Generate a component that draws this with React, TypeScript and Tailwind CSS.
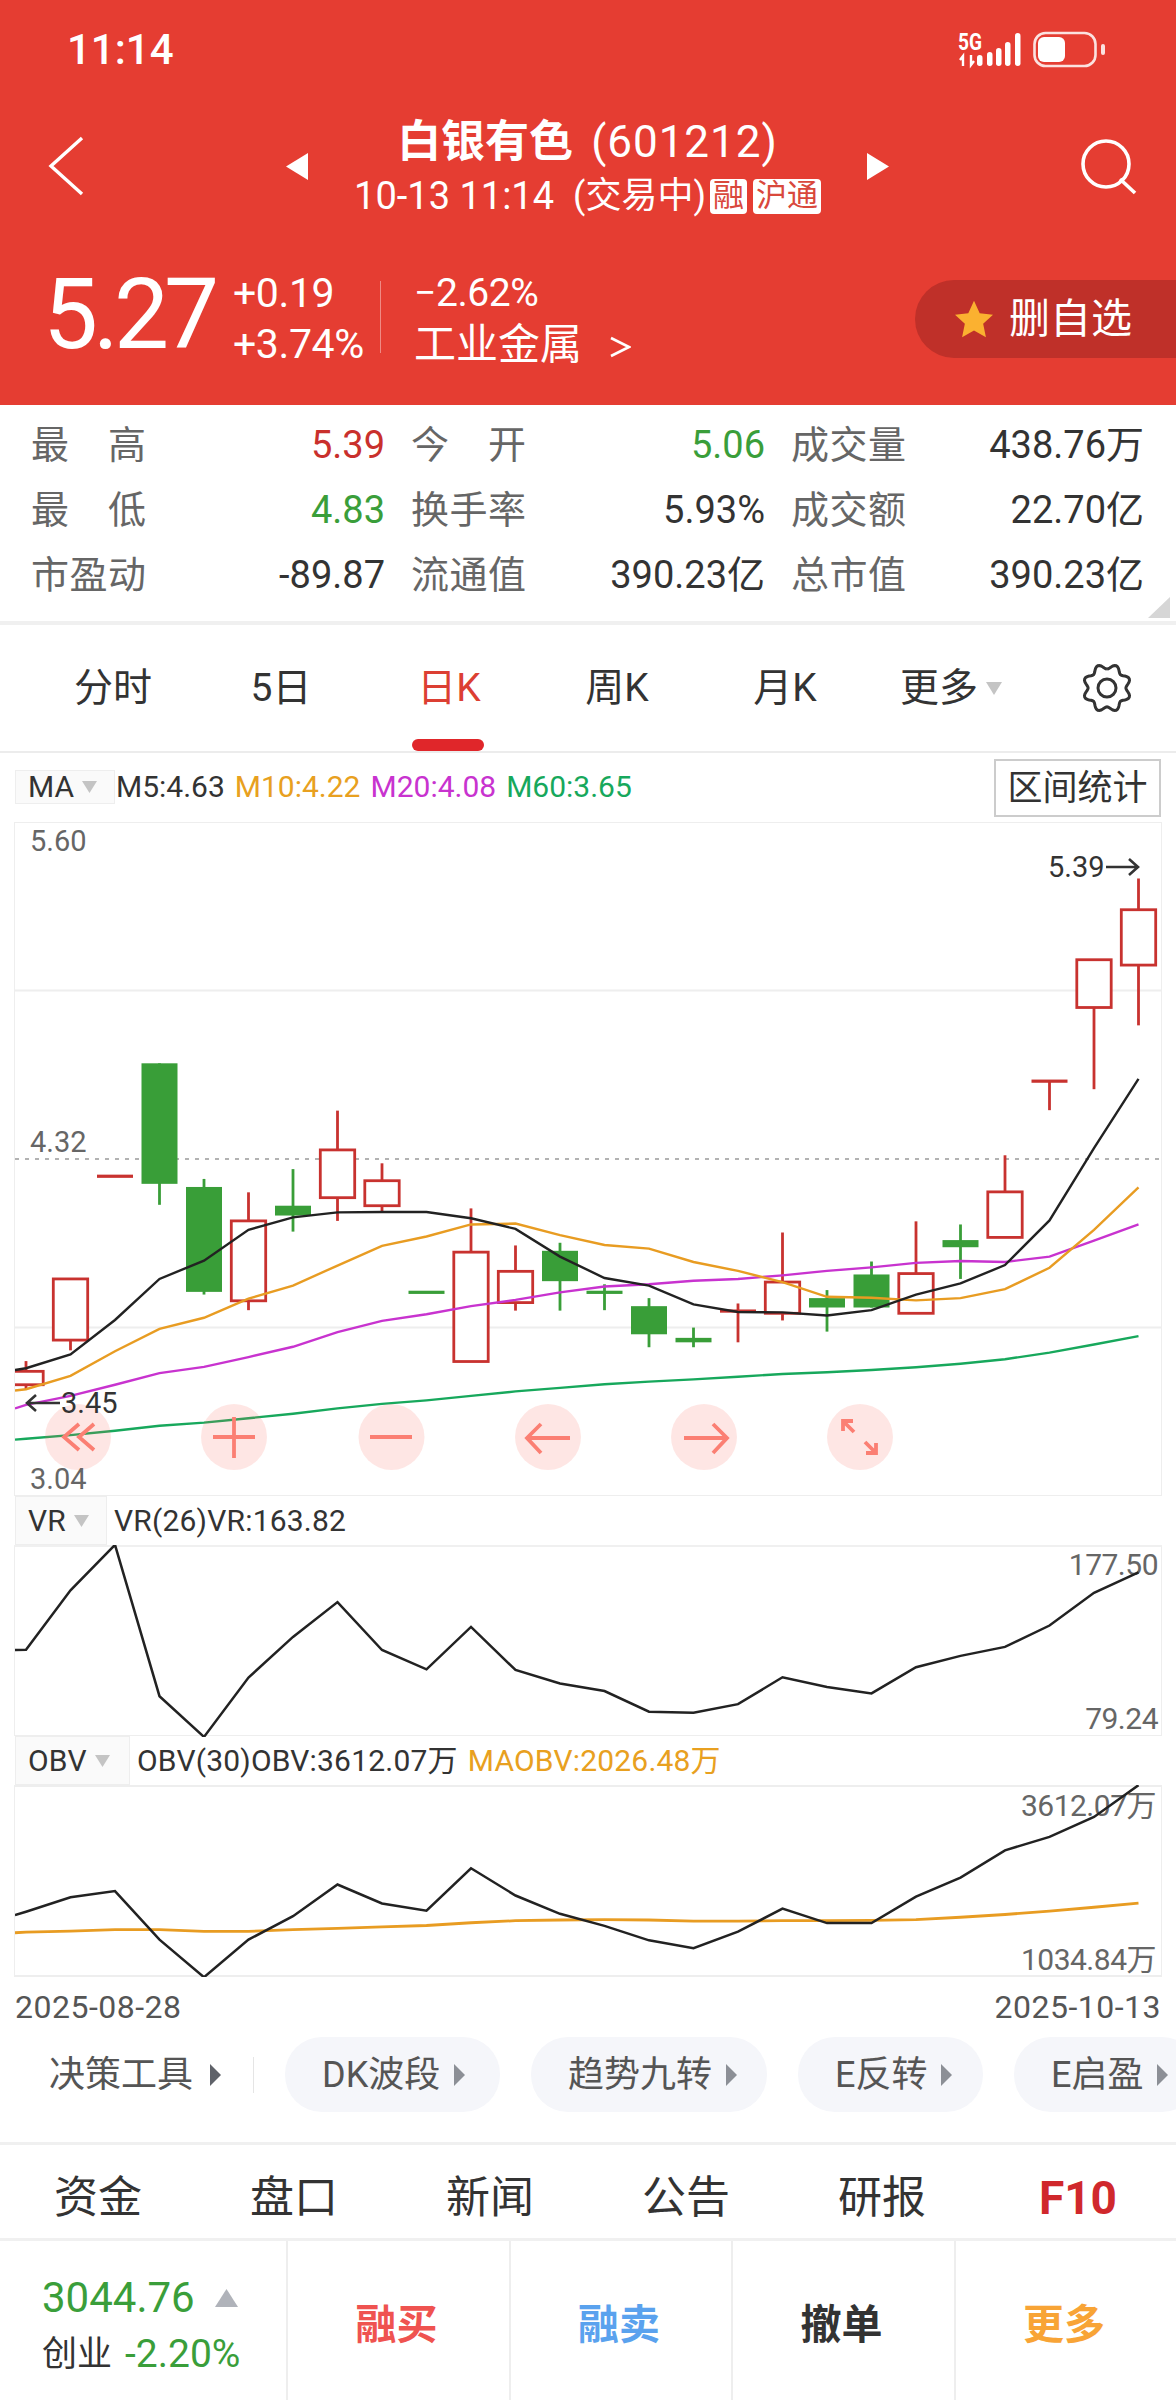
const FONT = "font-['Roboto','Noto_Sans_CJK_SC',sans-serif]";

const RED = '#c8322f';
const GREEN = '#399e38';
const cx = (i: number) => 26 + 44.5 * i;
const zy = (z: number) => 820 + z / 2.24;

// [type, bodyTop, bodyBottom, wickTop, wickBottom] in zoomed units
type Candle = ['r' | 'g', number, number, number | null, number | null];
const candles: Candle[] = [
  ['r', 1235, 1265, 1212, 1275],
  ['r', 1028, 1165, null, 1188],
  ['r', 798, 798, null, null],
  ['g', 545, 815, null, 862],
  ['g', 822, 1057, 804, 1063],
  ['r', 898, 1077, 834, 1098],
  ['g', 864, 886, 782, 922],
  ['r', 739, 846, 651, 898],
  ['r', 808, 864, 769, 877],
  ['g', 1058, 1058, null, null],
  ['r', 968, 1213, 870, null],
  ['r', 1011, 1081, 953, 1099],
  ['g', 965, 1033, 947, 1099],
  ['g', 1058, 1058, 1040, 1098],
  ['g', 1089, 1152, 1071, 1181],
  ['g', 1160, 1170, 1137, 1181],
  ['r', 1100, 1100, 1083, 1170],
  ['r', 1035, 1105, 924, 1121],
  ['g', 1071, 1092, 1053, 1146],
  ['g', 1018, 1092, 989, null],
  ['r', 1016, 1105, 899, null],
  ['g', 941, 957, 906, 1028],
  ['r', 833, 935, 751, null],
  ['r', 585, 585, null, 650],
  ['r', 313, 420, null, 603],
  ['r', 201, 325, 131, 460],
];

const ma5 = [1228, 1197, 1120, 1028, 987, 918, 890, 879, 878, 878, 892, 916, 978, 1026, 1043, 1085, 1102, 1103, 1110, 1098, 1063, 1038, 997, 897, 735, 580];
const ma10 = [1275, 1245, 1190, 1140, 1115, 1072, 1043, 998, 954, 933, 906, 904, 930, 952, 960, 990, 1010, 1035, 1068, 1070, 1076, 1071, 1051, 1003, 918, 823];
const ma20 = [1310, 1290, 1265, 1239, 1225, 1203, 1180, 1147, 1122, 1107, 1089, 1075, 1058, 1045, 1040, 1032, 1028, 1020, 1010, 1002, 992, 988, 990, 978, 942, 906];
const ma60 = [1386, 1378, 1368, 1357, 1350, 1340, 1330, 1318, 1308, 1300, 1290, 1280, 1272, 1264, 1258, 1253, 1247, 1241, 1237, 1232, 1226, 1218, 1208, 1193, 1175, 1156];

const vr = [492, 320, 188, 627, 745, 573, 455, 354, 493, 549, 426, 551, 590, 612, 672, 675, 650, 572, 600, 619, 543, 510, 484, 422, 327, 268];
const obv = [1252, 1210, 1192, 1333, 1442, 1333, 1265, 1173, 1228, 1249, 1126, 1205, 1258, 1293, 1335, 1358, 1310, 1243, 1285, 1285, 1208, 1153, 1074, 1035, 977, 885];
const maobv = [1311, 1308, 1304, 1304, 1309, 1309, 1304, 1300, 1296, 1292, 1284, 1278, 1276, 1275, 1276, 1279, 1279, 1278, 1278, 1277, 1275, 1268, 1260, 1250, 1239, 1227];

const maPoints = (list: number[], leftZ: number) =>
  `15,${zy(leftZ)} ` + list.map((z, i) => `${cx(i)},${zy(z)}`).join(' ');
const subY = (z: number) => 1480 + z / 2.9;
const subPoints = (list: number[], leftZ: number) =>
  `15,${subY(leftZ)} ` + list.map((z, i) => `${cx(i)},${subY(z)}`).join(' ');

const gearPath = Array.from({ length: 97 }, (_, i) => {
  const t = (i / 96) * Math.PI * 2;
  const r = 21.5 - 2.6 * Math.cos(8 * t);
  return `${i === 0 ? 'M' : 'L'}${(25 + r * Math.sin(t)).toFixed(2)} ${(25 - r * Math.cos(t)).toFixed(2)}`;
}).join(' ');

const Tri = ({ dir, color, w, h }: { dir: 'l' | 'r' | 'd' | 'u'; color: string; w: number; h: number }) => {
  const pts = {
    l: `${w},0 ${w},${h} 0,${h / 2}`,
    r: `0,0 ${w},${h / 2} 0,${h}`,
    d: `0,0 ${w},0 ${w / 2},${h}`,
    u: `${w / 2},0 ${w},${h} 0,${h}`,
  }[dir];
  return (
    <svg width={w} height={h} className="block shrink-0">
      <polygon points={pts} fill={color} strokeLinejoin="round" />
    </svg>
  );
};

const StatusBar = () => (
  <div className="flex h-[98px] items-start justify-between pl-[67px] pr-[71px] pt-[27px] text-white">
    <span className="text-[42px] leading-[46px] font-medium">11:14</span>
    <svg width={147} height={40} viewBox="958 30 147 40" className="mt-[3px] block">
      <text x="958" y="50" fill="#fff" fontSize="23" fontWeight="700" fontFamily="Roboto" textLength="24" lengthAdjust="spacingAndGlyphs">5G</text>
      <path d="M963 66v-10l-3 4M971 55v10l3-4" stroke="#fff" strokeWidth="2.4" fill="none" />
      {[[977, 55], [987, 52], [996, 48], [1005, 42], [1015, 33]].map(([x, y]) => (
        <rect key={x} x={x} y={y} width="5.5" height={66 - y} rx="2.7" fill="#fff" />
      ))}
      <rect x="1034.5" y="33" width="61" height="33" rx="11" fill="none" stroke="#fff" strokeOpacity="0.85" strokeWidth="2.6" />
      <rect x="1038" y="37" width="27" height="25" rx="6" fill="#fff" />
      <rect x="1101" y="44" width="4" height="11" rx="2" fill="#fff" fillOpacity="0.85" />
    </svg>
  </div>
);

const NavRow = () => (
  <div className="flex h-[140px] text-white">
    <svg width={50} height={62} viewBox="0 0 50 62" className="ml-[42px] mt-[37px] block">
      <path d="M40 3 9 31l31 28" fill="none" stroke="#fff" strokeWidth="3.4" />
    </svg>
    <div className="ml-[194px] mt-[52px] flex h-[32px] items-center">
      <Tri dir="l" color="#fff" w={22} h={27} />
    </div>
    <div className="flex w-[559px] flex-col items-center">
      <div className="mt-[16px] flex h-[56px] items-center text-[44px] whitespace-pre">
        <span className="font-bold">白银有色</span>
        <span className="ml-[18px] tracking-[1px]">(601212)</span>
      </div>
      <div className="mt-[6px] flex h-[40px] items-center text-[36px] whitespace-pre">
        <span className="text-[38px]">10-13 11:14</span>
        <span className="ml-[19px]">(交易中)</span>
        <span className="ml-[4px] flex h-[35px] w-[37px] items-center justify-center rounded-[4px] bg-white text-[31px] text-[#d9483c]">融</span>
        <span className="ml-[6px] flex h-[35px] w-[68px] items-center justify-center rounded-[4px] bg-white text-[31px] text-[#d9483c]">沪通</span>
      </div>
    </div>
    <div className="mt-[52px] flex h-[32px] items-center">
      <Tri dir="r" color="#fff" w={22} h={27} />
    </div>
    <svg width={60} height={60} viewBox="0 0 60 60" className="ml-[190px] mt-[39px] block">
      <circle cx="27" cy="27" r="23" fill="none" stroke="#fff" strokeWidth="3.6" />
      <path d="M41 42 56 56" stroke="#fff" strokeWidth="3.6" />
    </svg>
  </div>
);

const QuoteRow = () => (
  <div className="flex h-[167px] items-start text-white">
    <span className="ml-[43px] mt-[27px] w-[190px] text-[98px] leading-[100px] tracking-[-5px]">5.27</span>
    <div className="mt-[30px] flex w-[147px] flex-col text-[41px] leading-[51px] tracking-[-0.4px]">
      <span>+0.19</span>
      <span>+3.74%</span>
    </div>
    <div className="mt-[43px] h-[72px] w-[1px] bg-white/40" />
    <div className="ml-[33px] mt-[30px] flex flex-col text-[39px] leading-[51px]">
      <span className="tracking-[-0.4px]">−2.62%</span>
      <span className="flex items-center text-[42px]">
        工业金属
        <svg width={22} height={22} viewBox="0 0 22 22" className="ml-[27px] mt-[4px] block">
          <path d="M2 2 20 11 2 20" fill="none" stroke="#fff" strokeWidth="2.6" />
        </svg>
      </span>
    </div>
    <div className="ml-auto mt-[42px] flex h-[78px] w-[261px] items-center rounded-l-[39px] bg-[#bf3029] pl-[38px]">
      <svg width={42} height={38} viewBox="0 0 24 22" className="block">
        <path d="M12 0.5 15.3 7.6 23 8.6 17.3 13.8 18.9 21.5 12 17.6 5.1 21.5 6.7 13.8 1 8.6 8.7 7.6Z" fill="#fbb130" />
      </svg>
      <span className="ml-[14px] text-[41px] leading-none">删自选</span>
    </div>
  </div>
);

const Stat = ({ label, value, color = 'text-[#333]' }: { label: string[]; value: string; color?: string }) => (
  <div className="flex items-center justify-between">
    <span className="flex w-[115px] justify-between text-[#666]">
      {label.map((c, i) => <span key={i}>{c}</span>)}
    </span>
    <span className={color}>{value}</span>
  </div>
);

const Stats = () => (
  <div className="relative h-[220px] border-b-[4px] border-[#f0f0f0] pt-[7px]">
    <div className="grid grid-cols-[354px_354px_353px] grid-rows-[65px_65px_65px] gap-x-[26px] pl-[31px] text-[38px] leading-none">
      <Stat label={['最', '高']} value="5.39" color="text-[#c9302c]" />
      <Stat label={['今', '开']} value="5.06" color="text-[#3a9e3a]" />
      <Stat label={['成', '交', '量']} value="438.76万" />
      <Stat label={['最', '低']} value="4.83" color="text-[#3a9e3a]" />
      <Stat label={['换', '手', '率']} value="5.93%" />
      <Stat label={['成', '交', '额']} value="22.70亿" />
      <Stat label={['市', '盈', '动']} value="-89.87" />
      <Stat label={['流', '通', '值']} value="390.23亿" />
      <Stat label={['总', '市', '值']} value="390.23亿" />
    </div>
    <svg width={22} height={21} className="absolute right-[6px] top-[192px] block">
      <polygon points="22,0 22,21 0,21" fill="#d6d6d6" />
    </svg>
  </div>
);

const PeriodTabs = () => (
  <div className="flex h-[128px] border-b-[2px] border-[#ececec] pl-[29px] text-[39px] text-[#333]">
    {['分时', '5日', '日K', '周K', '月K'].map((t) => (
      <div key={t} className={`relative flex w-[168px] items-center justify-center ${t === '日K' ? 'text-[#dc3f33]' : ''}`}>
        {t}
        {t === '日K' && <span className="absolute bottom-0 left-[47px] h-[12px] w-[72px] rounded-full bg-[#e0262a]" />}
      </div>
    ))}
    <div className="flex w-[168px] items-center justify-center pr-[4px]">
      更多
      <span className="ml-[8px]"><Tri dir="d" color="#c4c4c4" w={16} h={13} /></span>
    </div>
    <svg width={50} height={50} viewBox="0 0 50 50" className="ml-[45px] mt-[38px] block">
      <path d={gearPath} fill="none" stroke="#333" strokeWidth="3" />
      <circle cx="25" cy="25" r="9" fill="none" stroke="#333" strokeWidth="3" />
    </svg>
  </div>
);

const SelectBox = ({ label, width }: { label: string; width: string }) => (
  <div className={`flex h-full items-center border border-[#eee] bg-[#fafafa] pl-[12px] ${width}`}>
    <span className="text-[#333]">{label}</span>
    <span className="ml-[8px]"><Tri dir="d" color="#c4c4c4" w={15} h={12} /></span>
  </div>
);

const MaBar = () => (
  <div className="flex h-[69px] items-start pl-[15px] text-[30px] leading-none">
    <div className="mt-[17px] flex h-[34px] items-center">
      <SelectBox label="MA" width="w-[100px]" />
      <span className="ml-[1px] text-[#333]">M5:4.63</span>
      <span className="ml-[10px] text-[#e8a020]">M10:4.22</span>
      <span className="ml-[10px] text-[#c833cf]">M20:4.08</span>
      <span className="ml-[10px] text-[#17a85c]">M60:3.65</span>
    </div>
    <div className="ml-auto mr-[15px] mt-[6px] flex h-[58px] w-[167px] items-center justify-center border-[2px] border-[#ccc] text-[35px] text-[#333]">
      区间统计
    </div>
  </div>
);

const MainChart = () => (
  <div className={`relative mx-[14px] h-[674px] overflow-hidden border border-[#eee] text-[29px] leading-none text-[#666] ${FONT}`}>
    <svg width={1146} height={673} viewBox="15 822 1146 673" className="-mt-px block">
      <line x1="15" x2="1161" y1="990.5" y2="990.5" stroke="#eee" strokeWidth="2" />
      <line x1="15" x2="1161" y1="1327.5" y2="1327.5" stroke="#eee" strokeWidth="2" />
      <line x1="15" x2="1161" y1="1159" y2="1159" stroke="#999" strokeWidth="1.6" strokeDasharray="4 6" />
      {candles.map(([type, top, bottom, wickTop, wickBottom], i) => {
        const color = type === 'r' ? RED : GREEN;
        const x = cx(i);
        const flat = top === bottom;
        return (
          <g key={i}>
            {(wickTop !== null || wickBottom !== null) && (
              <line x1={x} x2={x} y1={zy(wickTop ?? top)} y2={zy(wickBottom ?? bottom)} stroke={color} strokeWidth="2.8" />
            )}
            {flat ? (
              <rect x={x - 18} y={zy(top) - 1.6} width="36" height="3.2" fill={color} />
            ) : type === 'r' ? (
              <rect x={x - 17.2} y={zy(top)} width="34.4" height={zy(bottom) - zy(top)} fill="#fff" stroke={color} strokeWidth="2.8" />
            ) : (
              <rect x={x - 18} y={zy(top)} width="36" height={zy(bottom) - zy(top)} fill={color} />
            )}
          </g>
        );
      })}
      <polyline points={maPoints(ma60, 1388)} fill="none" stroke="#17a85c" strokeWidth="2.4" />
      <polyline points={maPoints(ma20, 1318)} fill="none" stroke="#c833cf" strokeWidth="2.4" />
      <polyline points={maPoints(ma10, 1278)} fill="none" stroke="#e89c22" strokeWidth="2.4" />
      <polyline points={maPoints(ma5, 1232)} fill="none" stroke="#222" strokeWidth="2.4" />
      <path d="M60 1403H27M36 1395l-9 8 9 8" fill="none" stroke="#333" strokeWidth="2.6" />
      <path d="M1106 867H1138M1129 859l9 8-9 8" fill="none" stroke="#333" strokeWidth="2.6" />
      <g fill="#f9625a" fillOpacity="0.16">
        {[78, 234, 391.5, 548, 704, 860].map((x) => <circle key={x} cx={x} cy="1437" r="33" />)}
      </g>
      <g fill="none" stroke="#fb7f73" strokeWidth="3.8">
        <path d="M79 1424 64 1437l15 13M94 1424 79 1437l15 13" />
        <path d="M213 1437h42M234 1417v41" />
        <path d="M370 1437h42" />
        <path d="M527 1438h43M541 1424 527 1438l14 15" />
        <path d="M684 1438h43M713 1424l14 14-14 15" />
        <path d="M843 1421l11 11M843 1431v-10h10" />
        <path d="M876 1453l-11-11M876 1443v10h-10" />
      </g>
    </svg>
    <span className="absolute left-[15px] top-[4px]">5.60</span>
    <span className="absolute left-[15px] top-[305px]">4.32</span>
    <span className="absolute left-[15px] top-[642px]">3.04</span>
    <span className="absolute left-[46px] top-[566px] text-[#333]">3.45</span>
    <span className="absolute left-[1033px] top-[30px] text-[#333]">5.39</span>
  </div>
);

const VrPanel = () => (
  <>
    <div className="flex h-[49px] items-center pl-[15px] text-[30px] leading-none tracking-[0.2px] text-[#333]">
      <SelectBox label="VR" width="w-[92px]" />
      <span className="ml-[7px]">VR(26)VR:163.82</span>
    </div>
    <div className="relative mx-[14px] h-[191px] border-x border-t-[2px] border-b border-[#eee] border-t-[#f0f0f0] text-[30px] leading-none tracking-[-0.5px] text-[#666]">
      <span className="absolute right-[3px] top-[3px]">177.50</span>
      <span className="absolute right-[3px] top-[157px]">79.24</span>
      <svg width={1146} height={192} viewBox="15 1545 1146 192" className="absolute left-0 top-[-2px] block">
        <polyline points={subPoints(vr, 493)} fill="none" stroke="#222" strokeWidth="2.5" />
      </svg>
    </div>
  </>
);

const ObvPanel = () => (
  <>
    <div className="flex h-[49px] items-center pl-[15px] text-[30px] leading-none tracking-[0.2px] text-[#333]">
      <SelectBox label="OBV" width="w-[115px]" />
      <span className="ml-[7px]">OBV(30)OBV:3612.07万</span>
      <span className="ml-[10px] text-[#e8a020]">MAOBV:2026.48万</span>
    </div>
    <div className="relative mx-[14px] h-[192px] border-x border-t-[2px] border-b-[2px] border-[#eee] text-[30px] leading-none tracking-[-0.5px] text-[#666]">
      <span className="absolute right-[5px] top-[4px]">3612.07万</span>
      <span className="absolute right-[5px] top-[158px]">1034.84万</span>
      <svg width={1146} height={192} viewBox="15 1785 1146 192" className="absolute left-0 top-[-2px] block">
        <polyline points={subPoints(maobv, 1313)} fill="none" stroke="#e89c22" strokeWidth="2.8" />
        <polyline points={subPoints(obv, 1262)} fill="none" stroke="#222" strokeWidth="2.5" />
      </svg>
    </div>
  </>
);

const Chip = ({ label, width }: { label: string; width: string }) => (
  <div className={`flex h-[75px] shrink-0 items-center rounded-[37px] bg-[#f5f6fa] pl-[37px] text-[#555] ${width}`}>
    <span>{label}</span>
    <span className="ml-[14px]"><Tri dir="r" color="#8c8f96" w={11} h={22} /></span>
  </div>
);

const ToolRow = () => (
  <div className="flex h-[75px] items-center overflow-hidden pl-[49px] text-[36px] leading-none text-[#555]">
    <span className="shrink-0">决策工具</span>
    <span className="ml-[17px] shrink-0"><Tri dir="r" color="#5f6269" w={11} h={22} /></span>
    <span className="ml-[32px] h-[36px] w-[1px] shrink-0 bg-[#e5e5e5]" />
    <div className="ml-[31px] flex gap-[31px]">
      <Chip label="DK波段" width="w-[215px]" />
      <Chip label="趋势九转" width="w-[236px]" />
      <Chip label="E反转" width="w-[185px]" />
      <Chip label="E启盈" width="w-[185px]" />
    </div>
  </div>
);

const InfoTabs = () => (
  <div className="grid h-[99px] grid-cols-6 border-y-[3px] border-[#f0f0f0] pt-[12px] text-[44px] leading-none text-[#333]">
    {['资金', '盘口', '新闻', '公告', '研报'].map((t) => (
      <div key={t} className="flex items-center justify-center">{t}</div>
    ))}
    <div className="flex items-center justify-center text-[46px] font-bold text-[#d0282c]">F10</div>
  </div>
);

const Trade = () => (
  <div className="grid h-[159px] grid-cols-[286px_223px_222px_223px_222px] text-[41px] leading-none font-bold">
    <div className="flex flex-col pl-[42px] pt-[36px] font-normal">
      <div className="flex items-center text-[42px] text-[#3a9e3a]">
        3044.76
        <span className="ml-[20px]"><Tri dir="u" color="#b0b3ba" w={23} h={18} /></span>
      </div>
      <div className="mt-[16px] flex items-center whitespace-pre text-[35px]">
        <span className="text-[#333]">创业</span>
        <span className="ml-[13px] text-[39px] text-[#3a9e3a]">-2.20%</span>
      </div>
    </div>
    <div className="flex items-center justify-center border-l-[2px] border-[#eee] pr-[4px] pt-[10px] text-[#ef5350]">融买</div>
    <div className="flex items-center justify-center border-l-[2px] border-[#eee] pr-[4px] pt-[10px] text-[#5aa2ee]">融卖</div>
    <div className="flex items-center justify-center border-l-[2px] border-[#eee] pr-[4px] pt-[10px] text-[#333]">撤单</div>
    <div className="flex items-center justify-center border-l-[2px] border-[#eee] pr-[4px] pt-[10px] text-[#f8a436]">更多</div>
  </div>
);

export default function App() {
  return (
    <div className={`h-[2400px] w-[1176px] overflow-hidden bg-white ${FONT}`}>
      <div className="h-[405px] bg-[#e53d32]">
        <StatusBar />
        <NavRow />
        <QuoteRow />
      </div>
      <Stats />
      <PeriodTabs />
      <MaBar />
      <MainChart />
      <VrPanel />
      <ObvPanel />
      <div className="flex h-[60px] items-center justify-between px-[15px] text-[32px] leading-none tracking-[0.5px] text-[#555]">
        <span>2025-08-28</span>
        <span>2025-10-13</span>
      </div>
      <ToolRow />
      <div className="h-[30px]" />
      <InfoTabs />
      <Trade />
    </div>
  );
}
